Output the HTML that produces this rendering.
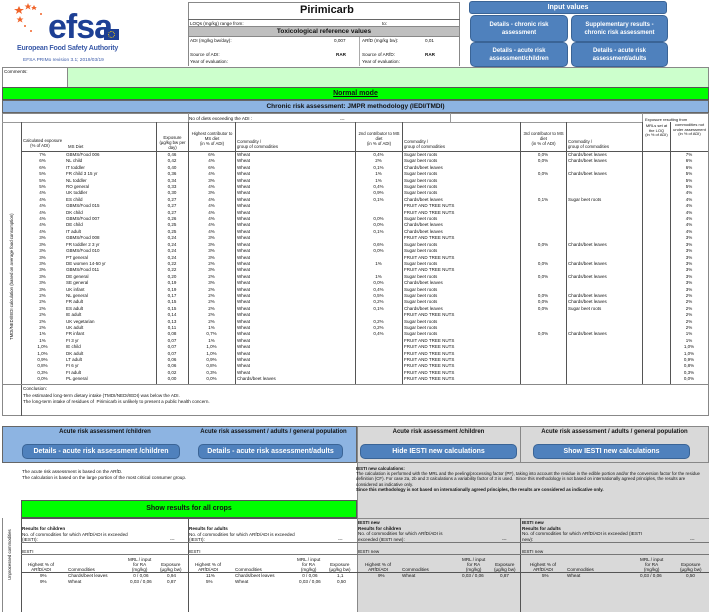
<!DOCTYPE html>
<html><head><meta charset="utf-8"><style>
*{margin:0;padding:0;box-sizing:border-box}
body{width:709px;height:612px;background:#fff;font-family:"Liberation Sans",sans-serif;position:relative;overflow:hidden;color:#111}
.a{position:absolute}
.t{font-size:4.6px;line-height:5px;white-space:nowrap}
.btn{position:absolute;background:#4f81bd;border:1px solid #3a6496;border-radius:5px;color:#fff;font-weight:bold;text-align:center;display:flex;align-items:center;justify-content:center}
.sb{font-size:7px;line-height:9px}
table{border-collapse:collapse;table-layout:fixed;position:absolute}
td{font-size:4.5px;line-height:6.4px;height:6.4px;white-space:nowrap;overflow:hidden;padding:0 2px}
.c{text-align:center}
.vl{position:absolute;width:1px;background:#555}
.hl{position:absolute;height:1px;background:#666}
</style></head><body>

<!-- logo -->
<svg class="a" style="left:14px;top:2px" width="30" height="30" viewBox="0 0 30 30">
<g fill="#f0642a"><polygon points="5,4 6.5,7 10,7 7,9 8,12 5,10 2,12 3,9 0,7 3.5,7"/><polygon points="14,1 15,3.5 17.5,3.5 15.5,5 16.5,7.5 14,6 11.5,7.5 12.5,5 10.5,3.5 13,3.5"/><polygon points="20,3 21,5 23,5 21.5,6 22,8 20,7 18,8 18.5,6 17,5 19,5"/><polygon points="6,14 7,16.5 9.5,16.5 7.5,18 8.5,20.5 6,19 3.5,20.5 4.5,18 2.5,16.5 5,16.5"/><circle cx="27" cy="12" r="1"/><circle cx="11" cy="24" r="1"/><circle cx="17" cy="29" r="1"/></g></svg>
<div class="a" style="left:48px;top:12px;font-size:34px;line-height:30px;color:#1d3f94;font-weight:bold;letter-spacing:-1px">efsa</div>
<div class="a" style="left:104px;top:29px;width:15px;height:11px;background:#1d3f94"><div style="margin:2px auto;width:7px;height:7px;border:1px dotted #ffd400;border-radius:50%"></div></div>
<div class="a" style="left:17px;top:45px;font-size:7px;color:#3a5aa8;font-weight:bold;letter-spacing:-0.2px">European Food Safety Authority</div>
<div class="a" style="left:23px;top:58px;font-size:4.8px;color:#3a5aa8">EFSA PRIMo revision 3.1; 2019/03/19</div>

<!-- top info box -->
<div class="a" style="left:188px;top:2px;width:272px;height:64px;border:1px solid #888;border-bottom:none"></div>
<div class="a" style="left:300px;top:4px;font-size:11px;font-weight:bold">Pirimicarb</div>
<div class="hl" style="left:188px;top:19px;width:272px"></div>
<div class="a t" style="left:190px;top:21px">LOQs (mg/kg) range from:</div><div class="a t" style="left:382px;top:21px">to:</div>
<div class="a" style="left:188px;top:26px;width:272px;height:11px;background:#bfbfbf;border:1px solid #888;font-size:6.5px;font-weight:bold;text-align:center;line-height:9px">Toxicological reference values</div>
<div class="a t" style="left:190px;top:38px">ADI (mg/kg bw/day):</div><div class="a t" style="left:334px;top:38px">0,007</div>
<div class="a t" style="left:362px;top:38px">ARfD (mg/kg bw):</div><div class="a t" style="left:425px;top:38px">0,01</div>
<div class="a t" style="left:190px;top:52px;">Source of ADI:</div><div class="a t" style="left:336px;top:52px;font-weight:bold">RAR</div>
<div class="a t" style="left:362px;top:52px">Source of ARfD:</div><div class="a t" style="left:425px;top:52px;font-weight:bold">RAR</div>
<div class="a t" style="left:190px;top:59px">Year of evaluation:</div><div class="a t" style="left:362px;top:59px">Year of evaluation:</div>
<div class="vl" style="left:359px;top:37px;height:29px;background:#aaa"></div>

<div class="btn sb" style="left:469px;top:1px;width:198px;height:13px;border-radius:3px">Input values</div>
<div class="btn sb" style="left:470px;top:15px;width:98px;height:27px;font-size:6px;line-height:8px">Details - chronic risk<br>assessment</div>
<div class="btn sb" style="left:571px;top:15px;width:97px;height:27px;font-size:6px;line-height:8px">Supplementary results -<br>chronic risk assessment</div>
<div class="btn sb" style="left:470px;top:42px;width:98px;height:25px;font-size:6px;line-height:8px">Details - acute risk<br>assessment/children</div>
<div class="btn sb" style="left:571px;top:42px;width:97px;height:25px;font-size:6px;line-height:8px">Details - acute risk<br>assessment/adults</div>

<!-- comments -->
<div class="a" style="left:2px;top:67px;width:707px;height:21px;border:1px solid #888;background:#ccffcc"></div>
<div class="a" style="left:2px;top:67px;width:66px;height:21px;border:1px solid #888;background:#fff"></div>
<div class="a t" style="left:4px;top:69px">Comments:</div>
<div class="a" style="left:2px;top:87px;width:707px;height:13px;background:#00ff00;border:1px solid #555;text-align:center;font-size:7px;font-weight:bold;line-height:11px"><u>Normal mode</u></div>
<div class="a" style="left:2px;top:100px;width:707px;height:13px;background:#8db4e2;border:1px solid #666;text-align:center;font-size:6.5px;font-weight:bold;line-height:11px">Chronic risk assessment: JMPR methodology (IEDI/TMDI)</div>
<div class="a" style="left:2px;top:113px;width:707px;height:303px;border:1px solid #888"></div>
<div class="hl" style="left:2px;top:122px;width:640px;background:#999"></div>
<div class="a t" style="left:189px;top:116px">No of diets exceeding the ADI :</div>
<div class="a t" style="left:340px;top:117px">---</div>
<div class="a t" style="left:645px;top:117px;font-size:4px">Exposure resulting from</div>
<div class="vl" style="left:188px;top:113px;height:9px;background:#999"></div>
<div class="vl" style="left:450px;top:113px;height:9px;background:#999"></div>
<div class="vl" style="left:642px;top:113px;height:9px;background:#999"></div>
<!-- column lines -->
<div class="vl" style="left:21px;top:122px;height:294px"></div>
<div class="vl" style="left:156px;top:122px;height:262px"></div>
<div class="vl" style="left:188px;top:122px;height:262px"></div>
<div class="vl" style="left:235px;top:122px;height:262px"></div>
<div class="vl" style="left:355px;top:122px;height:262px"></div>
<div class="vl" style="left:402px;top:122px;height:262px"></div>
<div class="vl" style="left:520px;top:122px;height:262px"></div>
<div class="vl" style="left:566px;top:122px;height:262px"></div>
<div class="vl" style="left:642px;top:122px;height:262px"></div>
<div class="vl" style="left:670px;top:122px;height:262px"></div>
<div class="hl" style="left:21px;top:151px;width:687px;background:#555"></div>
<div class="hl" style="left:2px;top:384px;width:707px;background:#888"></div>
<!-- headers -->
<div class="a t" style="left:23px;top:139px;font-size:4.3px;line-height:4.8px">Calculated exposure<br>&nbsp;&nbsp;&nbsp;&nbsp;&nbsp;&nbsp;(% of ADI)</div>
<div class="a t" style="left:68px;top:144px;font-size:4.3px">MS Diet</div>
<div class="a t" style="left:157px;top:136px;width:31px;text-align:center;font-size:4.3px;line-height:4.8px">Exposure<br>(µg/kg bw per<br>day)</div>
<div class="a t" style="left:189px;top:132px;width:46px;text-align:center;font-size:4.3px;line-height:4.8px">Highest contributor to<br>MS diet<br>(in % of ADI)</div>
<div class="a t" style="left:237px;top:140px;font-size:4.3px;line-height:4.8px">Commodity /<br>group of commodities</div>
<div class="a t" style="left:356px;top:132px;width:46px;text-align:center;font-size:4.3px;line-height:4.8px">2nd contributor to MS<br>diet<br>(in % of ADI)</div>
<div class="a t" style="left:404px;top:140px;font-size:4.3px;line-height:4.8px">Commodity /<br>group of commodities</div>
<div class="a t" style="left:521px;top:132px;width:45px;text-align:center;font-size:4.3px;line-height:4.8px">3rd contributor to MS<br>diet<br>(in % of ADI)</div>
<div class="a t" style="left:568px;top:140px;font-size:4.3px;line-height:4.8px">Commodity /<br>group of commodities</div>
<div class="a t" style="left:643px;top:124px;width:27px;text-align:center;font-size:4px;line-height:4.5px">MRLs set at<br>the LOQ<br>(in % of ADI)</div>
<div class="a t" style="left:671px;top:123px;width:37px;text-align:center;font-size:4px;line-height:4.5px">commodities not<br>under assessment<br>(in % of ADI)</div>
<div class="a t" style="left:9px;top:340px;transform:rotate(-90deg);transform-origin:0 0;font-size:4.3px">TMDI/NEDI/IEDI calculation (based on average food consumption)</div>

<table style="left:21px;top:152px;width:687px">
<colgroup><col style="width:43px"><col style="width:92px"><col style="width:32px"><col style="width:47px"><col style="width:120px"><col style="width:47px"><col style="width:118px"><col style="width:46px"><col style="width:76px"><col style="width:28px"><col style="width:38px"></colgroup>
<tr><td class="c">7%</td><td>GBMS/Food 006</td><td class="c">0,46</td><td class="c">6%</td><td>Wheat</td><td class="c">0,4%</td><td>Sugar beet roots</td><td class="c">0,0%</td><td>Chards/beet leaves</td><td></td><td class="c">7%</td></tr>
<tr><td class="c">6%</td><td>NL child</td><td class="c">0,42</td><td class="c">4%</td><td>Wheat</td><td class="c">2%</td><td>Sugar beet roots</td><td class="c">0,0%</td><td>Chards/beet leaves</td><td></td><td class="c">6%</td></tr>
<tr><td class="c">6%</td><td>IT toddler</td><td class="c">0,40</td><td class="c">6%</td><td>Wheat</td><td class="c">0,1%</td><td>Chards/beet leaves</td><td></td><td></td><td></td><td class="c">6%</td></tr>
<tr><td class="c">5%</td><td>FR child 3 15 yr</td><td class="c">0,36</td><td class="c">4%</td><td>Wheat</td><td class="c">1%</td><td>Sugar beet roots</td><td class="c">0,0%</td><td>Chards/beet leaves</td><td></td><td class="c">5%</td></tr>
<tr><td class="c">5%</td><td>NL toddler</td><td class="c">0,34</td><td class="c">3%</td><td>Wheat</td><td class="c">1%</td><td>Sugar beet roots</td><td></td><td></td><td></td><td class="c">5%</td></tr>
<tr><td class="c">5%</td><td>RO general</td><td class="c">0,33</td><td class="c">4%</td><td>Wheat</td><td class="c">0,4%</td><td>Sugar beet roots</td><td></td><td></td><td></td><td class="c">5%</td></tr>
<tr><td class="c">4%</td><td>UK toddler</td><td class="c">0,30</td><td class="c">3%</td><td>Wheat</td><td class="c">0,9%</td><td>Sugar beet roots</td><td></td><td></td><td></td><td class="c">4%</td></tr>
<tr><td class="c">4%</td><td>ES child</td><td class="c">0,27</td><td class="c">4%</td><td>Wheat</td><td class="c">0,1%</td><td>Chards/beet leaves</td><td class="c">0,1%</td><td>Sugar beet roots</td><td></td><td class="c">4%</td></tr>
<tr><td class="c">4%</td><td>GBMS/Food 015</td><td class="c">0,27</td><td class="c">4%</td><td>Wheat</td><td></td><td>FRUIT AND TREE NUTS</td><td></td><td></td><td></td><td class="c">4%</td></tr>
<tr><td class="c">4%</td><td>DK child</td><td class="c">0,27</td><td class="c">4%</td><td>Wheat</td><td></td><td>FRUIT AND TREE NUTS</td><td></td><td></td><td></td><td class="c">4%</td></tr>
<tr><td class="c">4%</td><td>GBMS/Food 007</td><td class="c">0,26</td><td class="c">4%</td><td>Wheat</td><td class="c">0,0%</td><td>Sugar beet roots</td><td></td><td></td><td></td><td class="c">4%</td></tr>
<tr><td class="c">4%</td><td>DE child</td><td class="c">0,25</td><td class="c">4%</td><td>Wheat</td><td class="c">0,0%</td><td>Chards/beet leaves</td><td></td><td></td><td></td><td class="c">4%</td></tr>
<tr><td class="c">4%</td><td>IT adult</td><td class="c">0,25</td><td class="c">4%</td><td>Wheat</td><td class="c">0,1%</td><td>Chards/beet leaves</td><td></td><td></td><td></td><td class="c">4%</td></tr>
<tr><td class="c">3%</td><td>GBMS/Food 008</td><td class="c">0,24</td><td class="c">3%</td><td>Wheat</td><td></td><td>FRUIT AND TREE NUTS</td><td></td><td></td><td></td><td class="c">3%</td></tr>
<tr><td class="c">3%</td><td>FR toddler 2 3 yr</td><td class="c">0,24</td><td class="c">3%</td><td>Wheat</td><td class="c">0,6%</td><td>Sugar beet roots</td><td class="c">0,0%</td><td>Chards/beet leaves</td><td></td><td class="c">3%</td></tr>
<tr><td class="c">3%</td><td>GBMS/Food 010</td><td class="c">0,24</td><td class="c">3%</td><td>Wheat</td><td class="c">0,0%</td><td>Sugar beet roots</td><td></td><td></td><td></td><td class="c">3%</td></tr>
<tr><td class="c">3%</td><td>PT general</td><td class="c">0,24</td><td class="c">3%</td><td>Wheat</td><td></td><td>FRUIT AND TREE NUTS</td><td></td><td></td><td></td><td class="c">3%</td></tr>
<tr><td class="c">3%</td><td>DE women 14-50 yr</td><td class="c">0,22</td><td class="c">2%</td><td>Wheat</td><td class="c">1%</td><td>Sugar beet roots</td><td class="c">0,0%</td><td>Chards/beet leaves</td><td></td><td class="c">3%</td></tr>
<tr><td class="c">3%</td><td>GBMS/Food 011</td><td class="c">0,22</td><td class="c">3%</td><td>Wheat</td><td></td><td>FRUIT AND TREE NUTS</td><td></td><td></td><td></td><td class="c">3%</td></tr>
<tr><td class="c">3%</td><td>DE general</td><td class="c">0,20</td><td class="c">2%</td><td>Wheat</td><td class="c">1%</td><td>Sugar beet roots</td><td class="c">0,0%</td><td>Chards/beet leaves</td><td></td><td class="c">3%</td></tr>
<tr><td class="c">3%</td><td>SE general</td><td class="c">0,19</td><td class="c">3%</td><td>Wheat</td><td class="c">0,0%</td><td>Chards/beet leaves</td><td></td><td></td><td></td><td class="c">3%</td></tr>
<tr><td class="c">3%</td><td>UK infant</td><td class="c">0,19</td><td class="c">2%</td><td>Wheat</td><td class="c">0,4%</td><td>Sugar beet roots</td><td></td><td></td><td></td><td class="c">3%</td></tr>
<tr><td class="c">2%</td><td>NL general</td><td class="c">0,17</td><td class="c">2%</td><td>Wheat</td><td class="c">0,5%</td><td>Sugar beet roots</td><td class="c">0,0%</td><td>Chards/beet leaves</td><td></td><td class="c">2%</td></tr>
<tr><td class="c">2%</td><td>FR adult</td><td class="c">0,15</td><td class="c">2%</td><td>Wheat</td><td class="c">0,2%</td><td>Sugar beet roots</td><td class="c">0,0%</td><td>Chards/beet leaves</td><td></td><td class="c">2%</td></tr>
<tr><td class="c">2%</td><td>ES adult</td><td class="c">0,15</td><td class="c">2%</td><td>Wheat</td><td class="c">0,1%</td><td>Chards/beet leaves</td><td class="c">0,0%</td><td>Sugar beet roots</td><td></td><td class="c">2%</td></tr>
<tr><td class="c">2%</td><td>IE adult</td><td class="c">0,14</td><td class="c">2%</td><td>Wheat</td><td></td><td>FRUIT AND TREE NUTS</td><td></td><td></td><td></td><td class="c">2%</td></tr>
<tr><td class="c">2%</td><td>UK vegetarian</td><td class="c">0,13</td><td class="c">2%</td><td>Wheat</td><td class="c">0,2%</td><td>Sugar beet roots</td><td></td><td></td><td></td><td class="c">2%</td></tr>
<tr><td class="c">2%</td><td>UK adult</td><td class="c">0,11</td><td class="c">1%</td><td>Wheat</td><td class="c">0,2%</td><td>Sugar beet roots</td><td></td><td></td><td></td><td class="c">2%</td></tr>
<tr><td class="c">1%</td><td>FR infant</td><td class="c">0,08</td><td class="c">0,7%</td><td>Wheat</td><td class="c">0,4%</td><td>Sugar beet roots</td><td class="c">0,0%</td><td>Chards/beet leaves</td><td></td><td class="c">1%</td></tr>
<tr><td class="c">1%</td><td>FI 3 yr</td><td class="c">0,07</td><td class="c">1%</td><td>Wheat</td><td></td><td>FRUIT AND TREE NUTS</td><td></td><td></td><td></td><td class="c">1%</td></tr>
<tr><td class="c">1,0%</td><td>IE child</td><td class="c">0,07</td><td class="c">1,0%</td><td>Wheat</td><td></td><td>FRUIT AND TREE NUTS</td><td></td><td></td><td></td><td class="c">1,0%</td></tr>
<tr><td class="c">1,0%</td><td>DK adult</td><td class="c">0,07</td><td class="c">1,0%</td><td>Wheat</td><td></td><td>FRUIT AND TREE NUTS</td><td></td><td></td><td></td><td class="c">1,0%</td></tr>
<tr><td class="c">0,9%</td><td>LT adult</td><td class="c">0,06</td><td class="c">0,9%</td><td>Wheat</td><td></td><td>FRUIT AND TREE NUTS</td><td></td><td></td><td></td><td class="c">0,9%</td></tr>
<tr><td class="c">0,8%</td><td>FI 6 yr</td><td class="c">0,06</td><td class="c">0,8%</td><td>Wheat</td><td></td><td>FRUIT AND TREE NUTS</td><td></td><td></td><td></td><td class="c">0,8%</td></tr>
<tr><td class="c">0,3%</td><td>FI adult</td><td class="c">0,02</td><td class="c">0,3%</td><td>Wheat</td><td></td><td>FRUIT AND TREE NUTS</td><td></td><td></td><td></td><td class="c">0,3%</td></tr>
<tr><td class="c">0,0%</td><td>PL general</td><td class="c">0,00</td><td class="c">0,0%</td><td>Chards/beet leaves</td><td></td><td>FRUIT AND TREE NUTS</td><td></td><td></td><td></td><td class="c">0,0%</td></tr>
</table>

<div class="a t" style="left:23px;top:386px;font-size:4.6px;line-height:6.5px">Conclusion:<br>The estimated long-term dietary intake (TMDI/NEDI/IEDI) was below the ADI.<br>The long-term intake of residues of&nbsp; Pirimicarb is unlikely to present a public health concern.</div>

<!-- acute section -->
<div class="a" style="left:2px;top:426px;width:355px;height:37px;background:#8db4e2;border:1px solid #666"></div>
<div class="a" style="left:357px;top:426px;width:352px;height:37px;background:#d9d9d9;border:1px solid #888"></div>
<div class="vl" style="left:520px;top:426px;height:37px;background:#888"></div>
<div class="a" style="left:2px;top:429px;width:206px;text-align:center;font-size:6px;font-weight:bold">Acute risk assessment /children</div>
<div class="a" style="left:190px;top:429px;width:167px;text-align:center;font-size:6px;font-weight:bold">Acute risk assessment / adults / general population</div>
<div class="a" style="left:357px;top:429px;width:163px;text-align:center;font-size:6px;font-weight:bold">Acute risk assessment /children</div>
<div class="a" style="left:520px;top:429px;width:189px;text-align:center;font-size:6px;font-weight:bold">Acute risk assessment / adults / general population</div>
<div class="btn" style="left:22px;top:444px;width:158px;height:15px;font-size:7px">Details - acute risk assessment /children</div>
<div class="btn" style="left:198px;top:444px;width:145px;height:15px;font-size:7px">Details - acute risk assessment/adults</div>
<div class="btn" style="left:360px;top:444px;width:157px;height:15px;font-size:7px">Hide IESTI new calculations</div>
<div class="btn" style="left:533px;top:444px;width:157px;height:15px;font-size:7px">Show IESTI new calculations</div>

<div class="a t" style="left:22px;top:469px;line-height:6px">The acute risk assessment is based on the ARfD.<br>The calculation is based on the large portion of the most critical consumer group.</div>
<div class="a" style="left:357px;top:463px;width:352px;height:149px;background:#d9d9d9"></div>
<div class="vl" style="left:357px;top:463px;height:149px;background:#888"></div>
<div class="a t" style="left:356px;top:466px;font-size:4.4px;line-height:5.2px;white-space:normal;width:350px"><b>IESTI new calculations:</b><br>The calculation is performed with the MRL and the peeling/processing factor (PF), taking into account the residue in the edible portion and/or the conversion factor for the residue definition (CF). For case 2a, 2b and 3 calculations a variability factor of 3 is used.&nbsp; Since this methodology is not based on internationally agreed principles, the results are considered as indicative only.<br><b>Since this methodology is not based on internationally agreed principles, the results are considered as indicative only.</b></div>

<div class="a" style="left:21px;top:500px;width:336px;height:18px;background:#00ff00;border:1px solid #555;text-align:center;font-size:7px;font-weight:bold;line-height:16px">Show results for all crops</div>
<div class="hl" style="left:357px;top:518px;width:352px;background:#888"></div>
<div class="a" style="left:2px;top:518px;width:1px;height:94px;background:#888"></div>
<div class="vl" style="left:21px;top:518px;height:94px"></div>
<div class="vl" style="left:188px;top:518px;height:94px"></div>
<div class="vl" style="left:520px;top:518px;height:94px"></div>
<div class="hl" style="left:21px;top:518px;width:336px;background:#555"></div>
<div class="hl" style="left:21px;top:542px;width:688px;background:#777"></div>
<div class="hl" style="left:21px;top:554px;width:688px;background:#777"></div>
<div class="hl" style="left:21px;top:572px;width:688px;background:#555"></div>
<div class="a t" style="left:7px;top:580px;transform:rotate(-90deg);transform-origin:0 0;font-size:4.3px">Unprocessed commodities</div>

<div class="a t" style="left:22px;top:526px;line-height:5.5px"><b>Results for children</b><br>No. of commodities for which ARfD/ADI is exceeded<br>(IESTI):</div><div class="a t" style="left:170px;top:537px">---</div>
<div class="a t" style="left:189px;top:526px;line-height:5.5px"><b>Results for adults</b><br>No. of commodities for which ARfD/ADI is exceeded<br>(IESTI):</div><div class="a t" style="left:338px;top:537px">---</div>
<div class="a t" style="left:358px;top:520px;line-height:5.5px"><b>IESTI new<br>Results for children</b><br>No. of commodities for which ARfD/ADI is<br>exceeded (IESTI new):</div><div class="a t" style="left:502px;top:537px">---</div>
<div class="a t" style="left:522px;top:520px;line-height:5.5px"><b>IESTI new<br>Results for adults</b><br>No. of commodities for which ARfD/ADI is exceeded (IESTI<br>new):</div><div class="a t" style="left:690px;top:537px">---</div>
<div class="a t" style="left:22px;top:549px">IESTI</div><div class="a t" style="left:189px;top:549px">IESTI</div><div class="a t" style="left:358px;top:549px">IESTI new</div><div class="a t" style="left:522px;top:549px">IESTI new</div>

<div class="a t" style="left:28px;top:562px;text-align:center;line-height:5px">Highest % of<br>ARfD/ADI</div>
<div class="a t" style="left:68px;top:567px">Commodities</div>
<div class="a t" style="left:128px;top:557px;text-align:center;line-height:5px">MRL / input<br>for RA<br>(mg/kg)</div>
<div class="a t" style="left:160px;top:562px;text-align:center;line-height:5px">Exposure<br>(µg/kg bw)</div>
<div class="a t" style="left:40px;top:573px;line-height:6.4px">9%<br>9%</div>
<div class="a t" style="left:68px;top:573px;line-height:6.4px">Chards/beet leaves<br>Wheat</div>
<div class="a t" style="left:130px;top:573px;line-height:6.4px;text-align:center">0 / 0,06<br>0,03 / 0,06</div>
<div class="a t" style="left:167px;top:573px;line-height:6.4px">0,94<br>0,87</div>

<div class="a t" style="left:195px;top:562px;text-align:center;line-height:5px">Highest % of<br>ARfD/ADI</div>
<div class="a t" style="left:235px;top:567px">Commodities</div>
<div class="a t" style="left:297px;top:557px;text-align:center;line-height:5px">MRL / input<br>for RA<br>(mg/kg)</div>
<div class="a t" style="left:329px;top:562px;text-align:center;line-height:5px">Exposure<br>(µg/kg bw)</div>
<div class="a t" style="left:206px;top:573px;line-height:6.4px">11%<br>5%</div>
<div class="a t" style="left:235px;top:573px;line-height:6.4px">Chards/beet leaves<br>Wheat</div>
<div class="a t" style="left:299px;top:573px;line-height:6.4px;text-align:center">0 / 0,06<br>0,03 / 0,06</div>
<div class="a t" style="left:337px;top:573px;line-height:6.4px">1,1<br>0,50</div>

<div class="a t" style="left:365px;top:562px;text-align:center;line-height:5px">Highest % of<br>ARfD/ADI</div>
<div class="a t" style="left:402px;top:567px">Commodities</div>
<div class="a t" style="left:462px;top:557px;text-align:center;line-height:5px">MRL / input<br>for RA<br>(mg/kg)</div>
<div class="a t" style="left:494px;top:562px;text-align:center;line-height:5px">Exposure<br>(µg/kg bw)</div>
<div class="a t" style="left:378px;top:573px">9%</div><div class="a t" style="left:402px;top:573px">Wheat</div><div class="a t" style="left:462px;top:573px">0,03 / 0,06</div><div class="a t" style="left:500px;top:573px">0,87</div>

<div class="a t" style="left:530px;top:562px;text-align:center;line-height:5px">Highest % of<br>ARfD/ADI</div>
<div class="a t" style="left:567px;top:567px">Commodities</div>
<div class="a t" style="left:640px;top:557px;text-align:center;line-height:5px">MRL / input<br>for RA<br>(mg/kg)</div>
<div class="a t" style="left:680px;top:562px;text-align:center;line-height:5px">Exposure<br>(µg/kg bw)</div>
<div class="a t" style="left:542px;top:573px">5%</div><div class="a t" style="left:567px;top:573px">Wheat</div><div class="a t" style="left:640px;top:573px">0,03 / 0,06</div><div class="a t" style="left:686px;top:573px">0,50</div>
</body></html>
